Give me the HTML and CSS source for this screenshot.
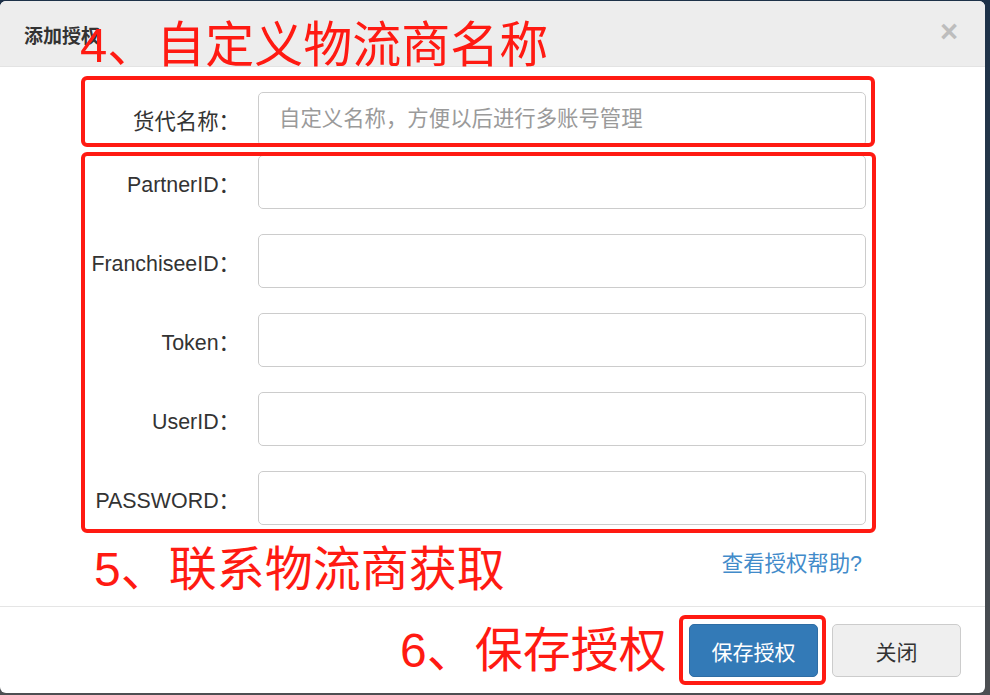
FILE: index.html
```html
<!DOCTYPE html>
<html lang="zh-CN">
<head>
<meta charset="utf-8">
<title>添加授权</title>
<link rel="stylesheet" href="styles.css">
</head>
<body>
<div class="modal">
  <div class="modal-header">
    <h4 class="modal-title">添加授权</h4>
    <span class="close">×</span>
  </div>
  <div class="modal-body">
    <div class="form-row first">
      <label class="form-label">货代名称：</label>
      <input class="form-input" type="text" placeholder="自定义名称，方便以后进行多账号管理">
    </div>
    <div class="form-row">
      <label class="form-label">PartnerID：</label>
      <input class="form-input" type="text">
    </div>
    <div class="form-row">
      <label class="form-label">FranchiseeID：</label>
      <input class="form-input" type="text">
    </div>
    <div class="form-row">
      <label class="form-label">Token：</label>
      <input class="form-input" type="text">
    </div>
    <div class="form-row">
      <label class="form-label">UserID：</label>
      <input class="form-input" type="text">
    </div>
    <div class="form-row last">
      <label class="form-label">PASSWORD：</label>
      <input class="form-input" type="text">
    </div>
    <div class="help-row">
      <a class="help-link" href="#">查看授权帮助?</a>
    </div>
  </div>
  <div class="modal-footer">
    <button class="btn btn-primary">保存授权</button>
    <button class="btn btn-default">关闭</button>
  </div>

  <div class="mark box-name"></div>
  <div class="mark box-fields"></div>
  <div class="mark box-save"></div>
  <div class="note note-4">4、自定义物流商名称</div>
  <div class="note note-5">5、联系物流商获取</div>
  <div class="note note-6">6、保存授权</div>
</div>
</body>
</html>
```

FILE: styles.css
```css
* { box-sizing: border-box; }

html, body {
  margin: 0;
  padding: 0;
}

body {
  width: 990px;
  height: 695px;
  overflow: hidden;
  background: linear-gradient(#1d3148, #2a3a4a 40%, #4d4f52);
  font-family: "Liberation Sans", "Noto Sans CJK SC", sans-serif;
  color: #333;
}

.modal {
  position: relative;
  width: 985px;
  height: 692px;
  margin-top: 1px;
  background: #fff;
  border-radius: 6px;
  overflow: hidden;
  display: flex;
  flex-direction: column;
}

.modal-header {
  height: 66px;
  background: #ededed;
  border-bottom: 1px solid #e3e3e3;
  display: flex;
  align-items: center;
  justify-content: space-between;
  padding: 0 27px 0 24px;
}

.modal-title {
  margin: 0;
  font-size: 19px;
  font-weight: bold;
  color: #333;
  padding-top: 2px;
}

.close {
  font-size: 31px;
  font-weight: bold;
  color: #bdbdbd;
  line-height: 1;
  padding-bottom: 4px;
}

.modal-body {
  flex: 1;
  padding: 25px 0 0 0;
}

.form-row {
  display: flex;
  align-items: center;
  margin-bottom: 25px;
}

.form-row.first { margin-bottom: 9px; }
.form-row.last { margin-bottom: 0; }

.form-label {
  width: 240px;
  margin-right: 18px;
  text-align: right;
  font-size: 21.4px;
  color: #333;
}

.form-input {
  width: 608px;
  height: 54px;
  border: 1px solid #cccccc;
  border-radius: 5px;
  padding: 0 20px;
  font-family: "Liberation Sans", "Noto Sans CJK SC", sans-serif;
  font-size: 21.4px;
  color: #555;
  background: #fff;
  outline: none;
}

.form-input::placeholder {
  color: #9a9a9a;
}

.help-row {
  display: flex;
  justify-content: flex-end;
  padding: 24px 123px 0 0;
}

.help-link {
  font-size: 21.4px;
  color: #428bca;
  text-decoration: none;
  line-height: 30px;
}

.modal-footer {
  height: 87px;
  border-top: 1px solid #e5e5e5;
  display: flex;
  justify-content: flex-end;
  align-items: flex-start;
  gap: 14px;
  padding: 17px 24px 0 0;
}

.btn {
  height: 53px;
  border-radius: 5px;
  font-family: "Liberation Sans", "Noto Sans CJK SC", sans-serif;
  font-size: 21px;
  padding: 0;
  cursor: pointer;
}

.btn-primary {
  width: 129px;
  background: #337ab7;
  border: 1px solid #2e6da4;
  color: #fff;
}

.btn-default {
  width: 129px;
  background: #efefef;
  border: 1px solid #cccccc;
  color: #333;
}

/* annotation overlays */
.mark {
  position: absolute;
  border: 4px solid #ff1a12;
  border-radius: 6px;
}

.box-name { left: 81px; top: 75px; width: 794px; height: 71px; }
.box-fields { left: 81px; top: 151px; width: 795px; height: 381px; }
.box-save { left: 679px; top: 614px; width: 147px; height: 70px; }

.note {
  position: absolute;
  font-family: "Liberation Sans", "Noto Sans CJK SC", sans-serif;
  font-size: 48px;
  line-height: 48px;
  color: #ff1a12;
  white-space: nowrap;
}

.note-4 { left: 80px; top: 20px; font-size: 49px; }
.note-5 { left: 94px; top: 545px; }
.note-6 { left: 400px; top: 626px; }
```
